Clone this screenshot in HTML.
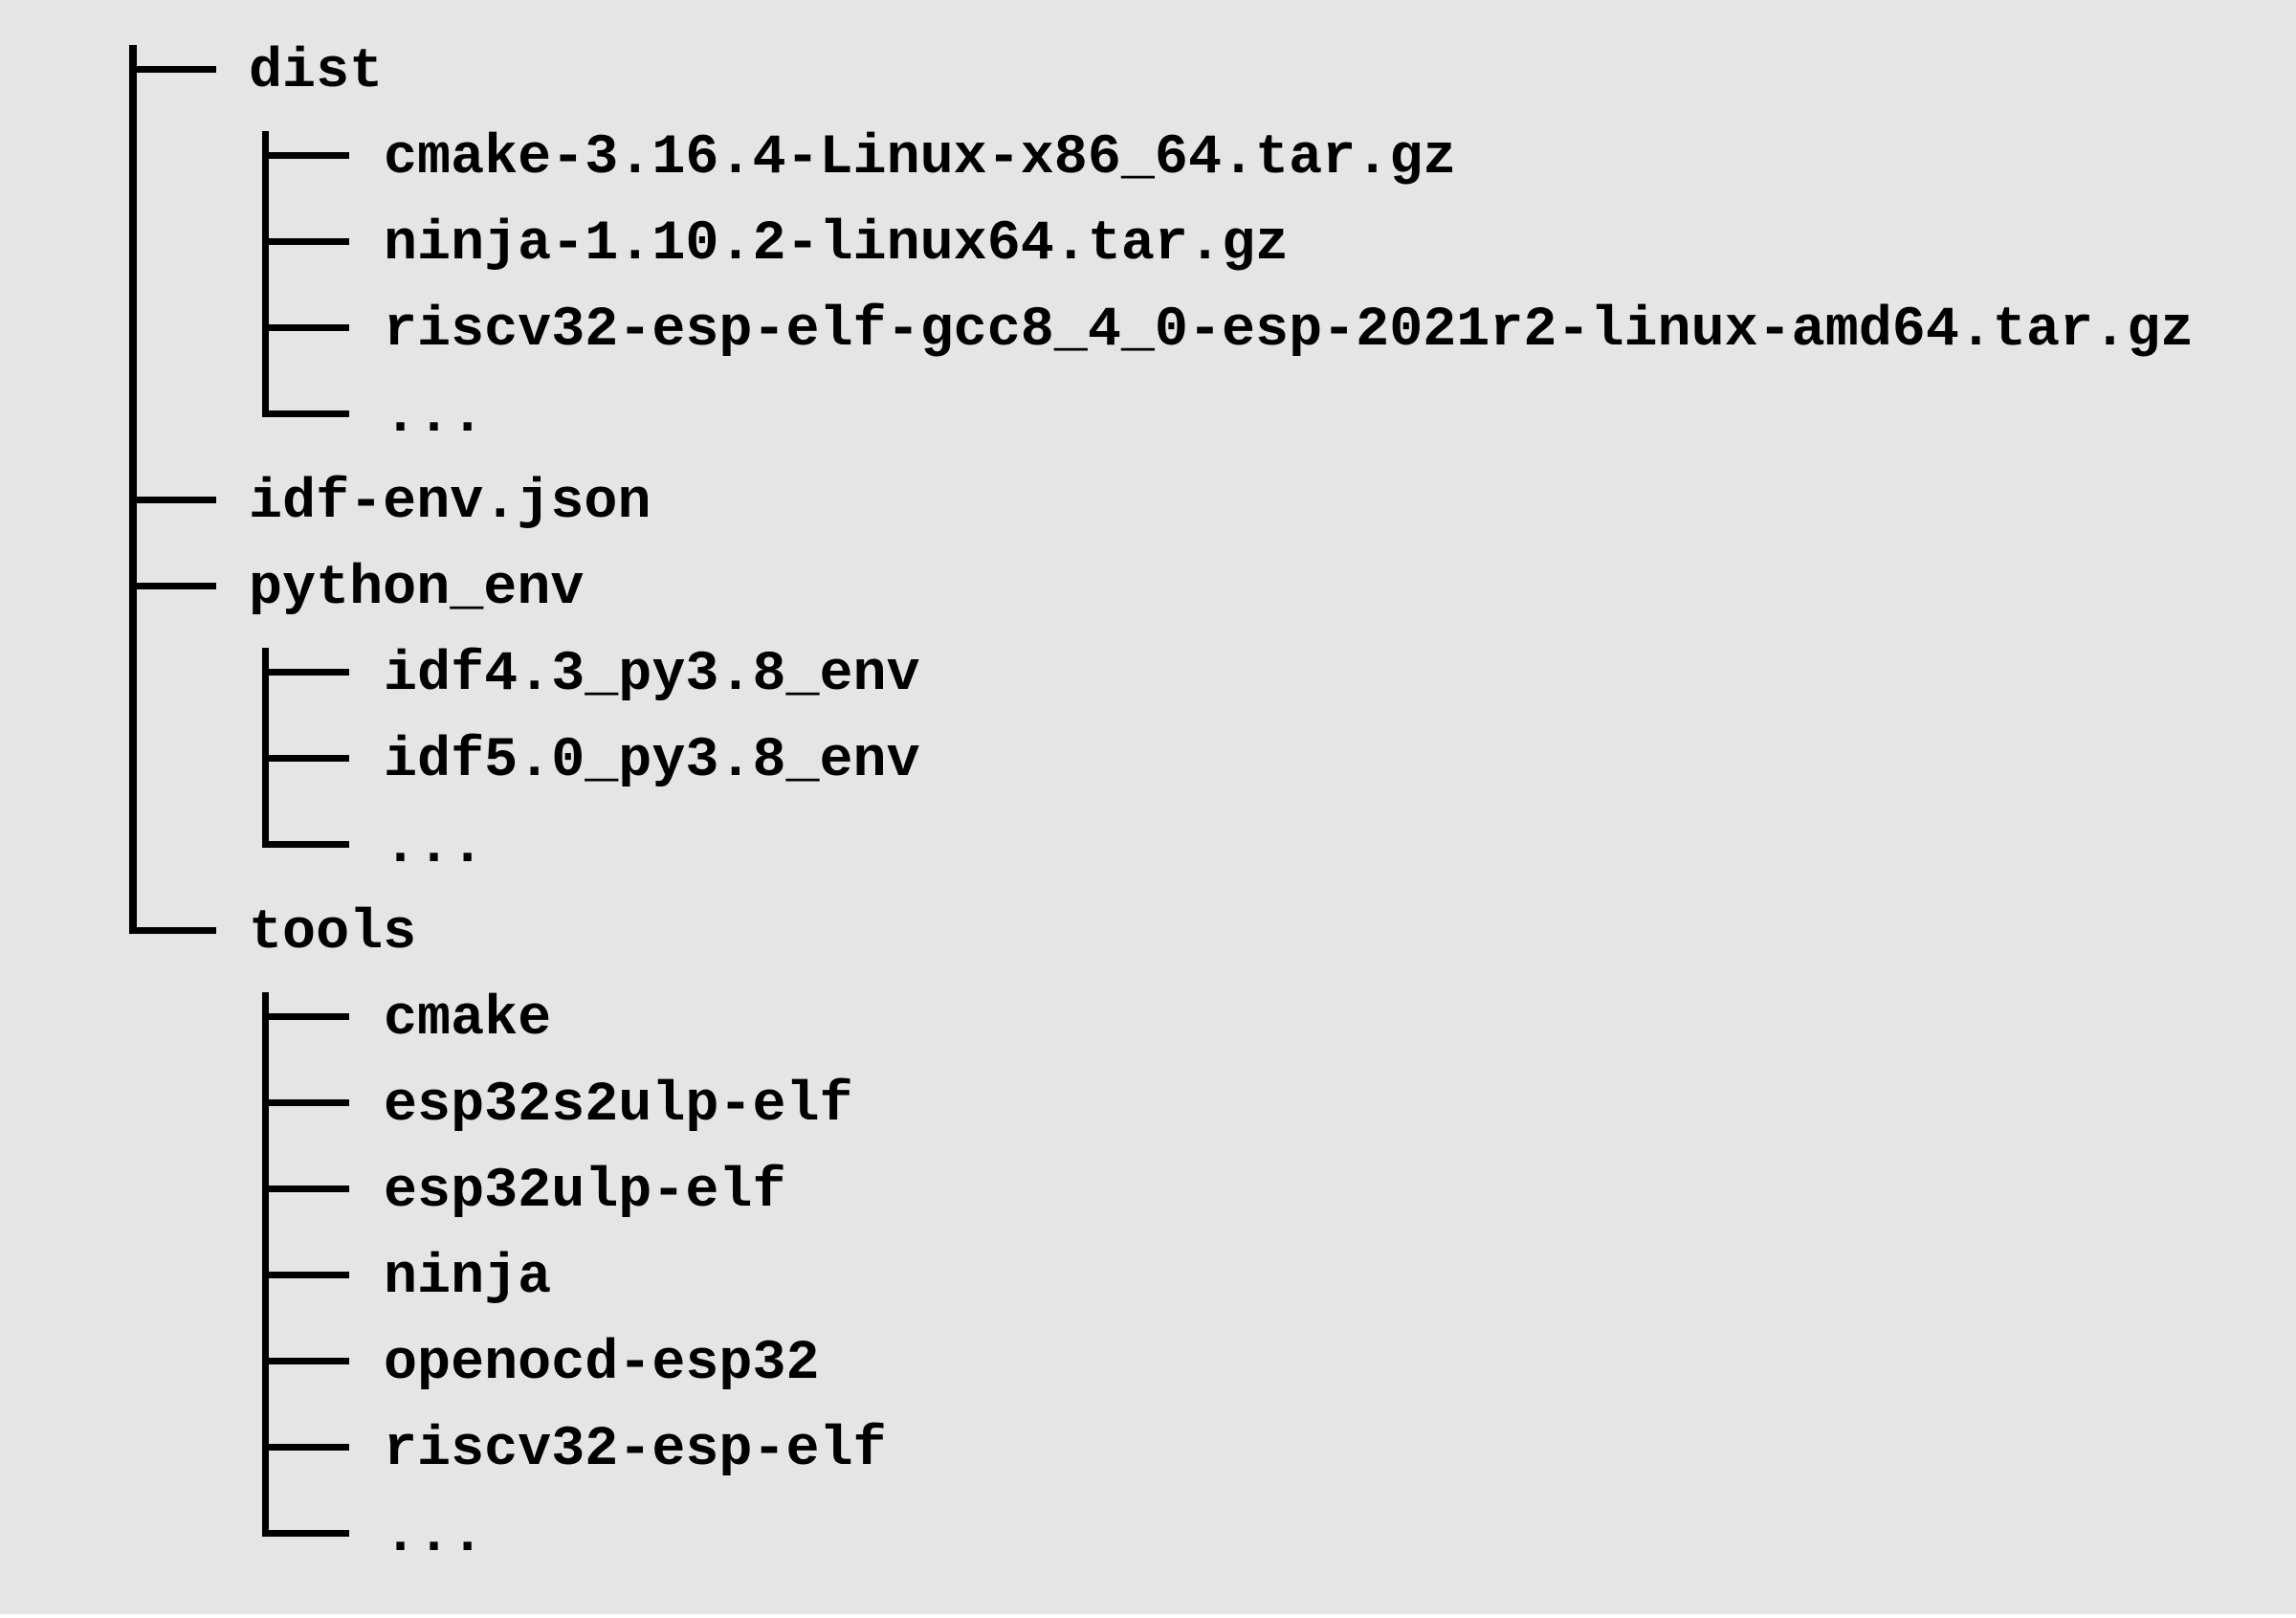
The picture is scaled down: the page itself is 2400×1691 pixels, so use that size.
<!DOCTYPE html>
<html><head><meta charset="utf-8"><style>
html,body{margin:0;padding:0}
body{width:2400px;height:1691px;background:#fff;position:relative;overflow:hidden}
#bg{position:absolute;left:0;top:0;width:2400px;height:1687px;background:#e5e5e5}
.t{position:absolute;font-family:"Liberation Mono",monospace;font-weight:bold;font-size:58.4px;line-height:90px;height:90px;white-space:pre;color:#000}
.v,.h{position:absolute;background:#000}
.h{height:7px}
.v{width:7px}
</style></head><body>
<div id="bg"></div>
<div class="v" style="left:135px;top:47px;height:929px;width:8px"></div>
<div id="c"></div>
<script>
var rows=[[0,"dist"],[1,"cmake-3.16.4-Linux-x86_64.tar.gz"],[1,"ninja-1.10.2-linux64.tar.gz"],[1,"riscv32-esp-elf-gcc8_4_0-esp-2021r2-linux-amd64.tar.gz"],[1,"..."],[0,"idf-env.json"],[0,"python_env"],[1,"idf4.3_py3.8_env"],[1,"idf5.0_py3.8_env"],[1,"..."],[0,"tools"],[1,"cmake"],[1,"esp32s2ulp-elf"],[1,"esp32ulp-elf"],[1,"ninja"],[1,"openocd-esp32"],[1,"riscv32-esp-elf"],[1,"..."]];
var h="";
rows.forEach(function(r,i){
 var cy=69+90*i;
 if(r[0]==0){h+='<div class="h" style="left:135px;top:'+cy+'px;width:91px"></div><div class="t" style="left:260px;top:'+(30+90*i)+'px">'+r[1]+'</div>';}
 else{h+='<div class="h" style="left:274px;top:'+cy+'px;width:91px"></div><div class="t" style="left:401px;top:'+(30+90*i)+'px">'+r[1]+'</div>';}
});
[[0,4],[6,9],[10,17]].forEach(function(p){
 var top=69+90*p[0]+68, bot=69+90*p[1]+7;
 h+='<div class="v" style="left:274px;top:'+top+'px;height:'+(bot-top)+'px"></div>';
});
document.getElementById("c").innerHTML=h;
</script>
</body></html>
